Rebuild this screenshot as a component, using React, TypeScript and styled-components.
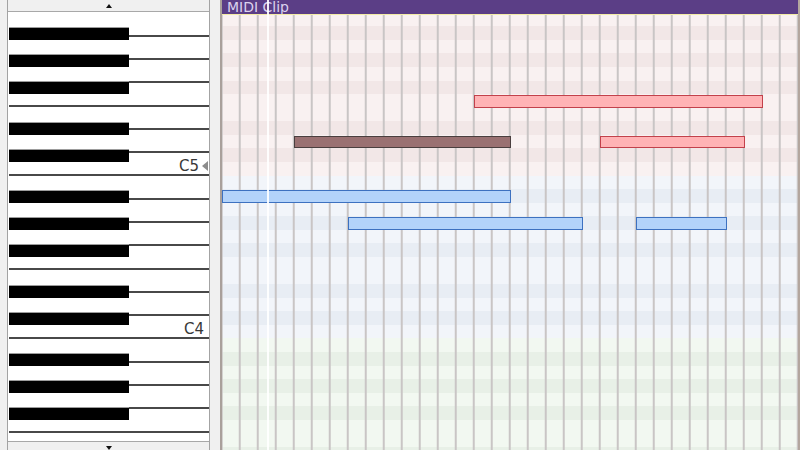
import React from 'react';
import styled, { createGlobalStyle } from 'styled-components';

const ROW = 163 / 12;
const WHITE = 163 / 7;
const COL = 18;

const NAMES = ['B', 'A#', 'A', 'G#', 'G', 'F#', 'F', 'E', 'D#', 'D', 'C#', 'C'];
const BLACK_ROWS = [1, 3, 5, 8, 10];
const WHITE_NAMES = ['B', 'A', 'G', 'F', 'E', 'D', 'C'];
const OCTAVES = [5, 4, 3];
// octaves whose C key is in view
const LABELLED = [5, 4];

type Band = 'pink' | 'blue' | 'green';
type Kind = 'red' | 'brown' | 'blue';

const bandFor: Record<number, Band> = { 5: 'pink', 4: 'blue', 3: 'green' };

const bandColors: Record<Band, { white: string; black: string }> = {
    pink: { white: '#f9f1f1', black: '#f2e7e7' },
    blue: { white: '#f2f5fa', black: '#e8edf4' },
    green: { white: '#f2f8f1', black: '#e8f0e7' },
};

const noteColors: Record<Kind, { fill: string; border: string }> = {
    red: { fill: '#ffb3b5', border: '#c2414b' },
    brown: { fill: '#9a7172', border: '#4a3f3f' },
    blue: { fill: '#b3d3fa', border: '#3d71c0' },
};

interface NoteData {
    octave: number
    name: string
    start: number
    length: number
    kind: Kind
}

const notes: NoteData[] = [
    { octave: 5, name: 'F', start: 14, length: 16, kind: 'red' },
    { octave: 5, name: 'D', start: 4, length: 12, kind: 'brown' },
    { octave: 5, name: 'D', start: 21, length: 8, kind: 'red' },
    { octave: 4, name: 'A#', start: 0, length: 16, kind: 'blue' },
    { octave: 4, name: 'G#', start: 7, length: 13, kind: 'blue' },
    { octave: 4, name: 'G#', start: 23, length: 5, kind: 'blue' },
];

const GlobalStyle = createGlobalStyle`
    html, body {
        margin: 0;
        padding: 0;
        overflow: hidden;
        background: #f0f0f0;
    }
`

const Piano = () => (
    <PianoPanel>
        <ScrollButton><UpArrow /></ScrollButton>
        <Keys>
            <KeysInner>
                {OCTAVES.map(octave => (
                    <Octave key={octave}>
                        {WHITE_NAMES.map(name => (
                            <WhiteKey key={name} $marked={name === 'C' && octave === 5}>
                                {name === 'C' && LABELLED.includes(octave) && (
                                    <KeyLabel>
                                        {`C${octave}`}
                                        {octave === 5 && <Marker />}
                                    </KeyLabel>
                                )}
                            </WhiteKey>
                        ))}
                        {BLACK_ROWS.map(idx => (
                            <BlackKey key={idx} $row={idx} />
                        ))}
                    </Octave>
                ))}
            </KeysInner>
        </Keys>
        <ScrollButton $bottom><DownArrow /></ScrollButton>
    </PianoPanel>
)

const NoteGrid = () => (
    <GridPanel>
        <ClipHeader>MIDI Clip</ClipHeader>
        <GridBody>
            <GridRows>
                {OCTAVES.map(octave =>
                    NAMES.map((name, idx) => {
                        const band = bandColors[bandFor[octave]]
                        const color = BLACK_ROWS.includes(idx) ? band.black : band.white
                        return (
                            <GridRow key={`${name}${octave}`} $color={color}>
                                {notes
                                    .filter(n => n.octave === octave && n.name === name)
                                    .map((n, i) => (
                                        <Note
                                            key={i}
                                            $kind={n.kind}
                                            style={{
                                                left: n.start * COL - 0.5,
                                                width: n.length * COL + 1.5,
                                            }}
                                        />
                                    ))}
                            </GridRow>
                        )
                    })
                )}
            </GridRows>
        </GridBody>
        <Playhead />
    </GridPanel>
)

export default function App() {
    return (
        <>
            <GlobalStyle />
            <Layout>
                <Piano />
                <Splitter />
                <NoteGrid />
            </Layout>
        </>
    )
}

const Layout = styled.div`
    display: flex;
    width: 800px;
    height: 453px;
    overflow: hidden;
`

const PianoPanel = styled.div`
    display: flex;
    flex-direction: column;
    width: 201px;
    margin-left: 7px;
    border-left: 1px solid #a3a3a3;
    border-right: 1px solid #a3a3a3;
    background: #ffffff;
`

const ScrollButton = styled.div<{ $bottom?: boolean }>`
    flex: none;
    height: 11px;
    display: flex;
    justify-content: center;
    align-items: center;
    background: #f0f0f0;
    ${p => p.$bottom ? 'border-top: 1px solid #a8a8a8;' : 'border-bottom: 1px solid #a8a8a8;'}
`

const UpArrow = styled.div`
    width: 0;
    height: 0;
    border-left: 3px solid transparent;
    border-right: 3px solid transparent;
    border-bottom: 4px solid #111;
`

const DownArrow = styled.div`
    width: 0;
    height: 0;
    border-left: 3px solid transparent;
    border-right: 3px solid transparent;
    border-top: 4px solid #111;
`

const Keys = styled.div`
    flex: 1;
    overflow: hidden;
`

const KeysInner = styled.div`
    margin-top: 1.5px;
`

const Octave = styled.div`
    position: relative;
    height: 163px;
`

const WhiteKey = styled.div<{ $marked?: boolean }>`
    box-sizing: border-box;
    height: ${WHITE}px;
    margin-left: 1px;
    border-bottom: 2px solid #484848;
    display: flex;
    justify-content: flex-end;
    align-items: flex-end;
    padding-right: ${p => p.$marked ? 1 : 5}px;
`

const KeyLabel = styled.div`
    display: flex;
    align-items: center;
    font-family: "DejaVu Sans", sans-serif;
    font-size: 15px;
    line-height: 16px;
    color: #383838;
`

const Marker = styled.div`
    width: 0;
    height: 0;
    margin-left: 3px;
    border-top: 5px solid transparent;
    border-bottom: 5px solid transparent;
    border-right: 6px solid #8c8c8c;
`

const BlackKey = styled.div<{ $row: number }>`
    position: absolute;
    left: 1px;
    top: ${p => p.$row * ROW}px;
    width: 120px;
    height: 12.8px;
    box-sizing: border-box;
    background: #000;
    border-top: 1px solid #9c9c9c;
`

const Splitter = styled.div`
    flex: none;
    width: 10px;
    background: #f0f0f0;
`

const GridPanel = styled.div`
    position: relative;
    flex: 1;
    display: flex;
    flex-direction: column;
    border-left: 2px solid #a9a09b;
    border-right: 2px solid #b3a69e;
    overflow: hidden;
`

const ClipHeader = styled.div`
    flex: none;
    height: 14px;
    padding-left: 5px;
    background: #5b3e86;
    border-bottom: 1px solid #f3eca6;
    color: #dcd2ee;
    font-family: "DejaVu Sans", sans-serif;
    font-size: 14px;
    line-height: 14px;
    overflow: hidden;
    white-space: nowrap;
`

const GridBody = styled.div`
    flex: 1;
    overflow: hidden;
`

const GridRows = styled.div`
    margin-top: -2.4px;
`

const GridRow = styled.div<{ $color: string }>`
    position: relative;
    height: ${ROW}px;
    background-color: ${p => p.$color};
    background-image: linear-gradient(90deg, transparent 16.5px, #c9c5c5 16.5px, #c9c5c5 18px);
    background-size: ${COL}px 100%;
    background-position: 0.75px 0;
`

const Note = styled.div<{ $kind: Kind }>`
    position: absolute;
    top: 1px;
    bottom: 0;
    box-sizing: border-box;
    background: ${p => noteColors[p.$kind].fill};
    border: 1.5px solid ${p => noteColors[p.$kind].border};
`

const Playhead = styled.div`
    position: absolute;
    top: 0;
    bottom: 0;
    left: 45px;
    width: 1.5px;
    background: #ffffff;
    opacity: 0.9;
`
